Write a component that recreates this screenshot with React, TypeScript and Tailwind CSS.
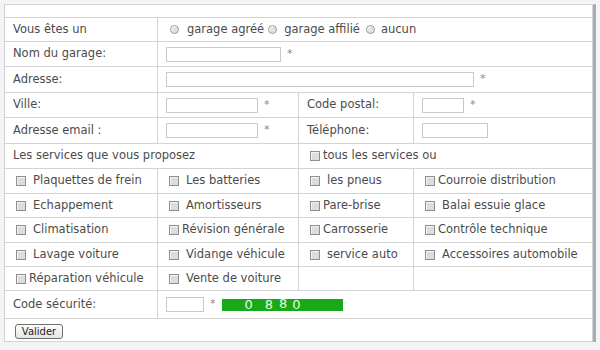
const font = { fontFamily: '"DejaVu Sans", Verdana, sans-serif' }

function Box({ w }: { w: string }) {
  return <span className={`block h-[15px] ${w} border border-[#c9c9c9] bg-white`} />
}

function Star() {
  return <span className="ml-[6px] text-[11px] text-[#8a8a8a]">*</span>
}

function Radio() {
  return (
    <span className="inline-block h-[9px] w-[9px] rounded-full border border-[#9a9a9a] bg-[#e2e2e2] shadow-[inset_1px_1px_0_#fff]" />
  )
}

function Check({ label, space }: { label: string; space?: boolean }) {
  return (
    <span className="flex items-center">
      <span className="ml-[3px] inline-block h-[10px] w-[10px] border border-[#8e8e8e] bg-[#dcdcdc] shadow-[inset_1px_1px_0_#f4f4f4]" />
      <span className={space ? 'ml-[7px]' : 'ml-[3px]'}>{label}</span>
    </span>
  )
}

const cell = 'flex items-center border-r border-b border-[#d3d3d3] pl-[8px] whitespace-nowrap'

const services: [string, boolean][][] = [
  [
    ['Plaquettes de frein', true],
    ['Les batteries', true],
    ['les pneus', true],
    ['Courroie distribution', false],
  ],
  [
    ['Echappement', true],
    ['Amortisseurs', true],
    ['Pare-brise', false],
    ['Balai essuie glace', true],
  ],
  [
    ['Climatisation', true],
    ['Révision générale', false],
    ['Carrosserie', false],
    ['Contrôle technique', false],
  ],
  [
    ['Lavage voiture', true],
    ['Vidange véhicule', true],
    ['service auto', true],
    ['Accessoires automobile', true],
  ],
]

export default function App() {
  return (
    <div className="h-[350px] w-[600px] bg-[#f4f4f4] pt-[4px] pl-[4px] text-[11.5px] text-[#4b4b4b]" style={font}>
      <div className="grid w-[592px] grid-cols-[153px_141px_115px_179px] grid-rows-[13px_24px_25px_26px_25px_26px_25px_25px_24px_25px_24px_24px_28px_23px] border-t border-l border-r-[3px] border-t-[#d6d6d6] border-l-[#cfcfcf] border-r-[#a2afbb] bg-white">
        {/* empty header row */}
        <div className="col-span-4 border-r border-b border-[#d3d3d3]" />

        <div className={cell}>Vous êtes un</div>
        <div className={`${cell} col-span-3`}>
          <span className="ml-[4px] flex items-center">
            <Radio />
            <span className="ml-[8px]">garage agréé</span>
          </span>
          <span className="ml-[4px] flex items-center">
            <Radio />
            <span className="ml-[7px]">garage affilié</span>
          </span>
          <span className="ml-[6px] flex items-center">
            <Radio />
            <span className="ml-[6px]">aucun</span>
          </span>
        </div>

        <div className={cell}>Nom du garage:</div>
        <div className={`${cell} col-span-3`}>
          <Box w="w-[115px]" />
          <Star />
        </div>

        <div className={cell}>Adresse:</div>
        <div className={`${cell} col-span-3`}>
          <Box w="w-[308px]" />
          <Star />
        </div>

        <div className={cell}>Ville:</div>
        <div className={cell}>
          <Box w="w-[92px]" />
          <Star />
        </div>
        <div className={cell}>Code postal:</div>
        <div className={cell}>
          <Box w="w-[42px]" />
          <Star />
        </div>

        <div className={cell}>Adresse email :</div>
        <div className={cell}>
          <Box w="w-[92px]" />
          <Star />
        </div>
        <div className={cell}>Téléphone:</div>
        <div className={cell}>
          <Box w="w-[66px]" />
        </div>

        <div className={`${cell} col-span-2`}>Les services que vous proposez</div>
        <div className={`${cell} col-span-2`}>
          <Check label="tous les services ou" />
        </div>

        {services.map((row, i) =>
          row.map(([label, space], j) => (
            <div key={`${i}-${j}`} className={cell}>
              <Check label={label} space={space} />
            </div>
          ))
        )}

        <div className={cell}>
          <Check label="Réparation véhicule" />
        </div>
        <div className={cell}>
          <Check label="Vente de voiture" space />
        </div>
        <div className={cell} />
        <div className={cell} />

        <div className={cell}>Code sécurité:</div>
        <div className={`${cell} col-span-3`}>
          <Box w="w-[38px]" />
          <Star />
          <span className="ml-[6px] flex h-[12px] w-[121px] items-center bg-[#18a818] text-[13px] leading-none text-[#e6ffe0]">
            <span className="ml-[23px]">0</span>
            <span className="ml-[12px]">8</span>
            <span className="ml-[6px] -mt-[2px]">8</span>
            <span className="ml-[5px]">0</span>
          </span>
        </div>

        <div className="col-span-4 flex items-start border-r border-b border-[#d3d3d3] pt-[5px] pl-[10px]">
          <button className="h-[15px] w-[48px] rounded-[3px] border border-[#6f6f6f] bg-gradient-to-b from-white to-[#e4e4e4] text-[10px] leading-none text-[#222]">
            Valider
          </button>
        </div>
      </div>
    </div>
  )
}
